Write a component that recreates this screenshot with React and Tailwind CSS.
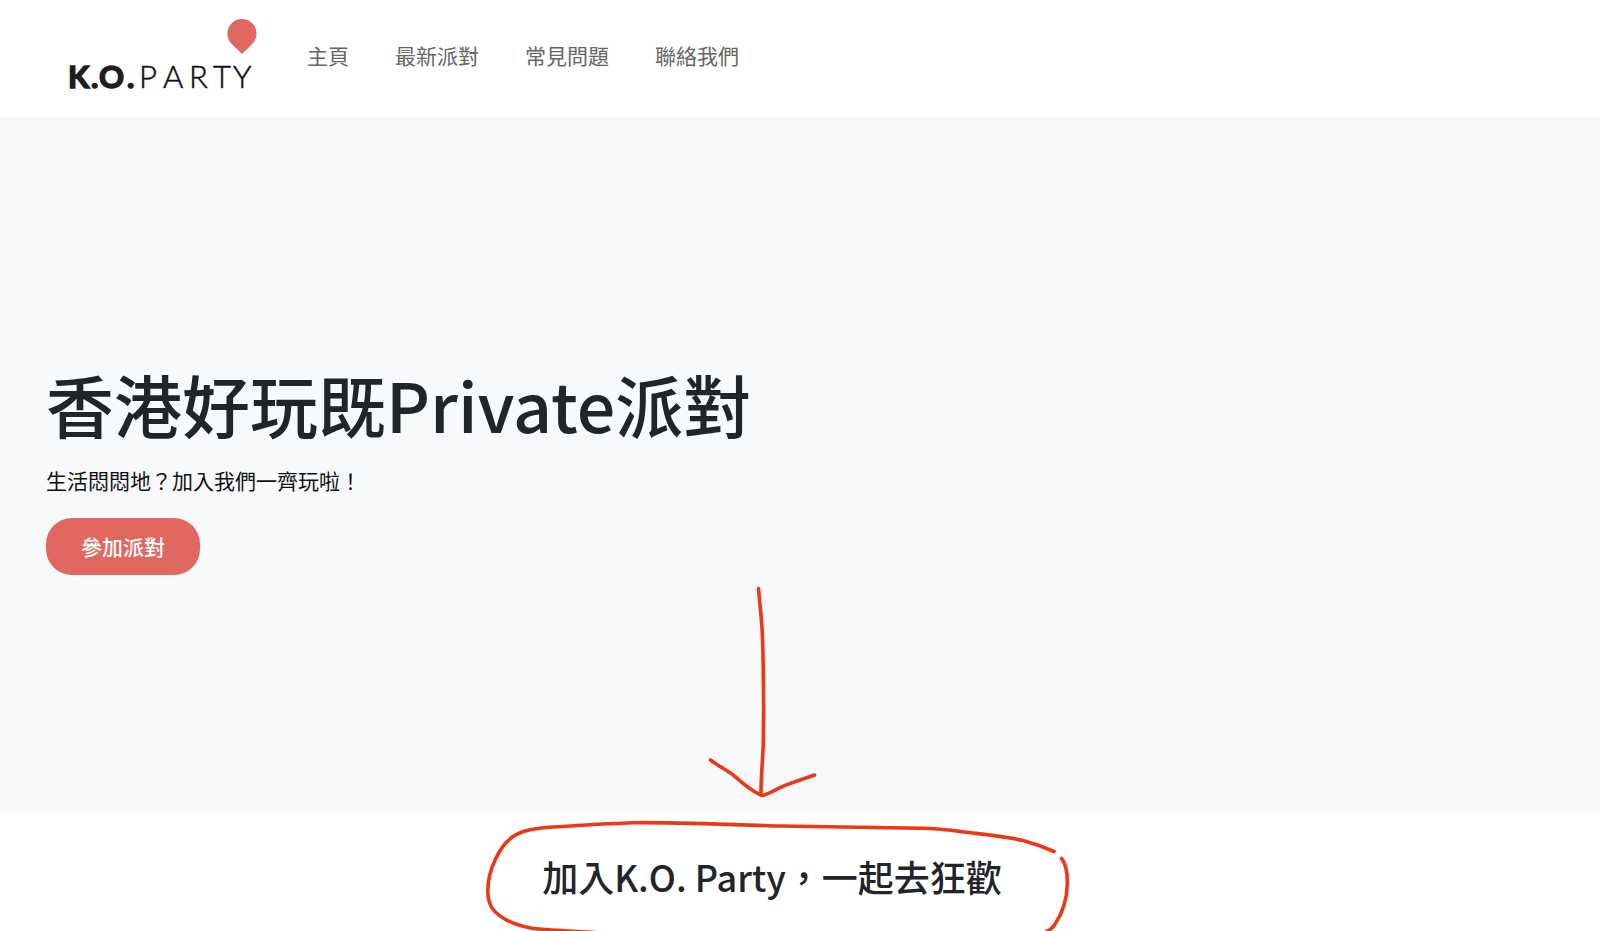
const NAV_ITEMS = ["主頁", "最新派對", "常見問題", "聯絡我們"];

function Logo() {
  return (
    <a href="#home" aria-label="K.O. PARTY" className="block shrink-0">
      <svg width="194" height="84" viewBox="66 16 194 84" className="block font-['Lato',sans-serif]">
        <path
          d="M242 53 L231.8 43 A14.6 14.6 0 1 1 252.2 43 Z"
          fill="#e06860"
        />
        <text
          x="68 91 99 127"
          y="87"
          fontSize="31"
          fontWeight="700"
          fill="#1f1f1f"
          stroke="#1f1f1f"
          strokeWidth="1.5"
        >
          K.O.
        </text>
        <text
          x="139 163 189 213 233"
          y="87"
          fontSize="31"
          fontWeight="300"
          fill="#111111"
          stroke="#111111"
          strokeWidth="0.5"
        >
          PARTY
        </text>
      </svg>
    </a>
  );
}

function Header() {
  return (
    <header className="flex h-[117px] items-center bg-white pl-[66px]">
      <Logo />
      <nav className="ml-[47px] flex gap-[46px] pb-2 text-[21px] leading-8 text-[#666666]">
        {NAV_ITEMS.map((item) => (
          <a key={item} href={`#${item}`}>
            {item}
          </a>
        ))}
      </nav>
    </header>
  );
}

function Hero() {
  return (
    <section className="flex min-h-[696px] flex-col items-start justify-center bg-[#f8f9fb] px-[46px] pt-2">
      <h1 className="text-[68px] font-medium leading-[80px] text-[#212529]">香港好玩既Private派對</h1>
      <p className="mt-5 text-[21px] leading-8 text-[#111111]">生活悶悶地？加入我們一齊玩啦！</p>
      <button
        type="button"
        className="mt-[22px] rounded-[26px] bg-[#e06860] px-[35px] py-3 text-[21px] font-medium leading-[33px] text-white"
      >
        參加派對
      </button>
    </section>
  );
}

function Scribble() {
  return (
    <svg
      width="600"
      height="351"
      viewBox="472 580 600 351"
      aria-hidden="true"
      className="pointer-events-none absolute bottom-0 left-1/2 -translate-x-1/2"
      fill="none"
      stroke="#ee3716"
      strokeWidth="3.6"
      strokeLinecap="round"
      strokeLinejoin="round"
    >
      <path d="M758.5 588.5 C759.5 602 761.5 617 762.3 633 C763.5 665 763.8 710 763.3 743 C762.8 760 761 775 761 793" />
      <path d="M710.5 760 C717 765 726 770 732.5 774.5 C741 781 745 787 761.5 795.5 C769 794.5 778 787.5 790 783.5 L814.5 775" />
      <path d="M1054 851.5 C1045 847.5 1034 843.5 1023 840.5 C1003 836 985 834.5 964 832 C949 830 938 828.5 922 828.3 C880 827.5 830 827 780 826 C735 825 680 822.3 633 822.7 C605 823.5 580 825.5 553 827 C535 828.3 523 830 513 836.5 C500 846 487.5 869 487.8 892 C488 900 489.5 904 492 908 C500 919 514 925 532 928.3 C550 930.5 575 931 600 933" />
      <path d="M1061.5 858.5 C1065.5 863 1067.5 872 1067.3 884 C1067 900 1062 914 1054.5 925 C1052 928.5 1049 931 1044 933" />
    </svg>
  );
}

function Join() {
  return (
    <section className="relative mr-14 flex min-h-[118px] items-center justify-center bg-white pt-2">
      <h2 className="text-[36px] font-medium leading-[48px] text-[#212529]">加入K.O. Party，一起去狂歡</h2>
      <Scribble />
    </section>
  );
}

export default function App() {
  return (
    <div lang="zh-Hant" className="min-h-screen bg-white font-['Noto_Sans_CJK_TC',sans-serif]">
      <Header />
      <main>
        <Hero />
        <Join />
      </main>
    </div>
  );
}
